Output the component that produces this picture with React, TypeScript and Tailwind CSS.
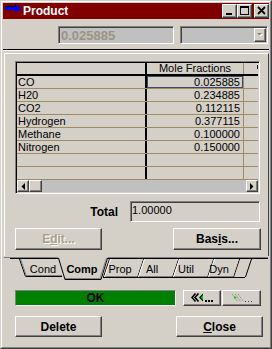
import React from "react";

// classic 3D bevels
const raised =
  "border border-t-white border-l-white border-r-[#404040] border-b-[#404040] shadow-[inset_-1px_-1px_0_#808080]";
const sunken =
  "border border-t-[#808080] border-l-[#808080] border-r-white border-b-white shadow-[inset_1px_1px_0_#404040]";

const rows: [string, string][] = [
  ["CO", "0.025885"],
  ["H20", "0.234885"],
  ["CO2", "0.112115"],
  ["Hydrogen", "0.377115"],
  ["Methane", "0.100000"],
  ["Nitrogen", "0.150000"],
  ["", ""],
  ["", ""],
];

const TitleBtn = ({ children, className = "" }: { children: React.ReactNode; className?: string }) => (
  <div className={`w-[15px] h-[14px] bg-[#d4d0c8] ${raised} flex items-center justify-center ${className}`}>
    {children}
  </div>
);

const Button = ({ children, className = "" }: { children: React.ReactNode; className?: string }) => (
  <div className={`h-full bg-[#d4d0c8] ${raised} flex items-center justify-center text-[12px] font-bold ${className}`}>
    {children}
  </div>
);

const Tabs = () => (
  <div className="relative h-[26px] shrink-0">
    {/* tab outlines */}
    <svg className="absolute inset-0" width="266" height="26" viewBox="3 256 266 26">
      <path d="M4 257.5 H59 M107 257.5 H268" stroke="#808080" />
      <path d="M10 258.5 H59 M107 258.5 H268" stroke="#000" />
      {/* trailing scroll slashes */}
      <path d="M233 277.5 H245" stroke="#000" />
      <path d="M233.5 277 L239.5 259 M245.5 277 L251.5 259" stroke="#000" />
      {/* tabs right of active */}
      {[207, 172, 137, 103].map((x, i) => {
        const next = [233, 207, 172, 137][i];
        return (
          <g key={x}>
            <polygon points={`${x + 6},259 ${x},277 ${next},277 ${next + 6},259`} fill="#d4d0c8" />
            <path d={`M${x} 276.5 H${next}`} stroke="#808080" />
            <path d={`M${x} 277.5 H${next}`} stroke="#000" />
            <path d={`M${x + 0.5} 277 L${x + 6.5} 259`} stroke="#000" />
            <path d={`M${x + 1.5} 277 L${x + 7.5} 259`} stroke="#fff" />
          </g>
        );
      })}
      {/* Cond */}
      <polygon points="20,259 26,276 62,276 62,259" fill="#d4d0c8" />
      <path d="M26 275.5 H62" stroke="#808080" />
      <path d="M26 276.5 H62" stroke="#000" />
      <path d="M19.5 259 L25.5 276.5" stroke="#000" />
      <path d="M20.5 259 L26.5 276" stroke="#808080" />
      {/* Comp (active) */}
      <polygon points="58,257 65,279 101,279 108,257" fill="#d4d0c8" />
      <path d="M65 278.5 H101" stroke="#808080" />
      <path d="M65 279.5 H101" stroke="#000" />
      <path d="M58.5 258 L65 279.5" stroke="#000" />
      <path d="M101 279.5 L107.5 258" stroke="#000" />
      <path d="M100 278.5 L106.5 258" stroke="#808080" />
    </svg>
    <div className="relative flex h-full items-center text-[11px] leading-none">
      <span className="ml-[22px] w-[36px] text-center">Cond</span>
      <span className="ml-[1px] w-[40px] text-center font-bold">Comp</span>
      <span className="ml-[2px] w-[32px] text-center">Prop</span>
      <span className="ml-[1px] w-[30px] text-center">All</span>
      <span className="ml-[4px] w-[30px] text-center">Util</span>
      <span className="ml-[3px] w-[30px] text-center">Dyn</span>
    </div>
  </div>
);

export default function App() {
  return (
    <div className="w-[272px] h-[349px] overflow-hidden bg-[#d4d0c8] font-['Liberation_Sans',Arial,sans-serif] text-black select-none">
      <div className="h-full border border-t-[#d4d0c8] border-l-[#d4d0c8] border-r-[#404040] border-b-[#404040]">
        <div className="h-full border border-t-white border-l-white border-r-[#808080] border-b-[#808080] p-px flex flex-col">
          {/* Title bar */}
          <div className="h-[16px] shrink-0 bg-[#800000] flex items-center">
            <svg width="16" height="9" viewBox="0 0 16 9" className="ml-[2px] self-start mt-[1px]">
              <polygon points="0,2.5 10,2.5 10,0 16,4.5 10,9 10,6 0,6" fill="#0000ff" />
              <path d="M0 2.5 H10.5 V0.8" stroke="#000" fill="none" />
            </svg>
            <span className="ml-[2px] text-white font-bold text-[12px] leading-none">Product</span>
            <div className="ml-auto flex items-center">
              <TitleBtn>
                <svg width="13" height="12" viewBox="0 0 13 12">
                  <rect x="3" y="8" width="6" height="2" fill="#000" />
                </svg>
              </TitleBtn>
              <TitleBtn>
                <svg width="13" height="12" viewBox="0 0 13 12">
                  <rect x="2" y="1" width="9" height="9" fill="#000" />
                  <rect x="3" y="3" width="7" height="6" fill="#d4d0c8" />
                </svg>
              </TitleBtn>
              <TitleBtn className="ml-[2px]">
                <svg width="13" height="12" viewBox="0 0 13 12">
                  <path d="M3 2 L10 9 M10 2 L3 9" stroke="#000" strokeWidth="1.8" />
                </svg>
              </TitleBtn>
            </div>
          </div>

          {/* Toolbar */}
          <div className="h-[30px] shrink-0 flex pt-[7px]">
            <div className={`ml-[55px] w-[116px] h-[18px] bg-[#c0c0c0] ${sunken} flex items-center pl-[2px]`}>
              <span className="text-[13px] font-bold leading-none text-[#9c9480]">0.025885</span>
            </div>
            <div className={`ml-[6px] w-[88px] h-[18px] bg-[#c0c0c0] ${sunken} flex justify-end items-center pr-px`}>
              <div className={`w-[12px] h-[14px] bg-[#d4d0c8] ${raised} flex items-center justify-center`}>
                <svg width="7" height="5" viewBox="0 0 7 5">
                  <polygon points="1,1 6,1 3.5,3.5" fill="#fff" />
                  <polygon points="0,0 5,0 2.5,2.5" fill="#808080" />
                </svg>
              </div>
            </div>
          </div>

          <div className="h-[2px] shrink-0 border-t border-t-black border-b border-b-white" />
          <div className="h-[2px] shrink-0" />

          {/* Tab page */}
          <div className="ml-px h-[203px] shrink-0 border-l border-t border-r border-l-white border-t-white border-r-[#404040] flex flex-col">
            {/* Composition grid */}
            <div className="ml-[10px] mt-[7px] w-[245px] h-[133px] shrink-0 p-px border border-t-[#808080] border-l-[#808080] border-r-white border-b-white shadow-[inset_1px_1px_0_#000,inset_-1px_-1px_0_#d4d0c8] flex flex-col overflow-hidden">
              <div className="h-[13px] shrink-0 flex border-b-2 border-black text-[11px] leading-[11px]">
                <div className="w-[130px] shrink-0 border-r-2 border-black" />
                <div className="w-[97px] shrink-0 border-r border-[#a08c64] text-center whitespace-nowrap">Mole Fractions</div>
                <div className="flex-1 pl-[13px] pt-[2px]">
                  {/* first stroke of the next, clipped column title */}
                  <svg width="1" height="4" viewBox="0 0 1 4">
                    <rect x="0" y="0" width="1" height="4" fill="#000" />
                  </svg>
                </div>
              </div>
              {rows.map((r, i) => (
                <div key={i} className="h-[13px] shrink-0 flex border-b border-[#a08c64] text-[11px] leading-[12px]">
                  <div className="w-[130px] shrink-0 border-r-2 border-black pl-px">{r[0]}</div>
                  <div
                    className={`w-[97px] shrink-0 border-r border-[#a08c64] text-right pr-[3px] ${
                      i === 0 ? "shadow-[inset_0_0_0_1px_#3b4a6b]" : ""
                    }`}
                  >
                    {r[1]}
                  </div>
                  <div className="flex-1" />
                </div>
              ))}
              <div className="h-[12px] shrink-0 flex bg-[#c0c0c0]">
                <div className={`w-[12px] bg-[#d4d0c8] ${raised} flex items-center justify-center`}>
                  <svg width="4" height="7" viewBox="0 0 4 7">
                    <polygon points="4,0 0.5,3.5 4,7" fill="#000" />
                  </svg>
                </div>
                <div className={`w-[13px] bg-[#d4d0c8] ${raised}`} />
                <div className="flex-1" />
                <div className={`w-[12px] bg-[#d4d0c8] ${raised} flex items-center justify-center`}>
                  <svg width="4" height="7" viewBox="0 0 4 7">
                    <polygon points="0,0 3.5,3.5 0,7" fill="#000" />
                  </svg>
                </div>
              </div>
            </div>

            {/* Total */}
            <div className="mt-[7px] h-[21px] shrink-0 flex items-center">
              <span className="w-[113px] text-right font-bold text-[12px] leading-none">Total</span>
              <div className={`ml-[12px] w-[130px] h-full ${sunken} pl-px pt-[2px] text-[11px] leading-[12px]`}>1.00000</div>
            </div>

            {/* Edit / Basis */}
            <div className="mt-[6px] h-[22px] shrink-0 flex">
              <Button className="ml-[10px] w-[87px] text-[#aa9f88] [text-shadow:1px_1px_0_#fff]">
                <span>
                  E<span className="underline">d</span>it...
                </span>
              </Button>
              <Button className="ml-[71px] w-[88px]">
                <span>
                  Bas<span className="underline">i</span>s...
                </span>
              </Button>
            </div>
          </div>

          <Tabs />

          {/* Status + navigation */}
          <div className="mt-[8px] h-[16px] shrink-0 flex">
            <div className="ml-[12px] w-[161px] h-full bg-[#008000] border border-t-[#808080] border-l-[#808080] border-r-white border-b-white flex items-center justify-center font-bold text-[12px] leading-none">
              OK
            </div>
            <div className={`ml-[7px] w-[38px] h-full bg-[#d4d0c8] ${raised} flex items-center justify-center`}>
              <svg width="22" height="10" viewBox="0 0 22 10">
                <polyline points="4.5,0.5 1,4.5 4.5,8.5" fill="none" stroke="#000" strokeWidth="1.6" />
                <polyline points="7.5,0.5 4,4.5 7.5,8.5" fill="none" stroke="#000" strokeWidth="1.6" />
                <polygon points="8,4.5 12,0.5 12,8.5" fill="#000" />
                <polygon points="9.5,4.5 12,2 12,7" fill="#00d000" />
                <rect x="14" y="7" width="2" height="2" fill="#000" />
                <rect x="17" y="7" width="2" height="2" fill="#000" />
                <rect x="20" y="7" width="2" height="2" fill="#000" />
              </svg>
            </div>
            <div className={`ml-px w-[39px] h-full bg-[#d4d0c8] ${raised} flex items-center justify-center`}>
              <svg width="22" height="10" viewBox="0 0 22 10">
                <path d="M1 1 L7 9 M4 1 L10 9 M7 1 L13 9" stroke="#808080" strokeDasharray="1 1" />
                <polygon points="3,3 6,4.5 3,6" fill="#00d000" />
                <rect x="14" y="8" width="1" height="1" fill="#404040" />
                <rect x="17" y="8" width="1" height="1" fill="#404040" />
                <rect x="20" y="8" width="1" height="1" fill="#404040" />
              </svg>
            </div>
          </div>

          {/* Delete / Close */}
          <div className="mt-[10px] h-[21px] shrink-0 flex">
            <Button className="ml-[12px] w-[87px]">Delete</Button>
            <Button className="ml-[74px] w-[87px]">
              <span>
                <span className="underline">C</span>lose
              </span>
            </Button>
          </div>
        </div>
      </div>
    </div>
  );
}
